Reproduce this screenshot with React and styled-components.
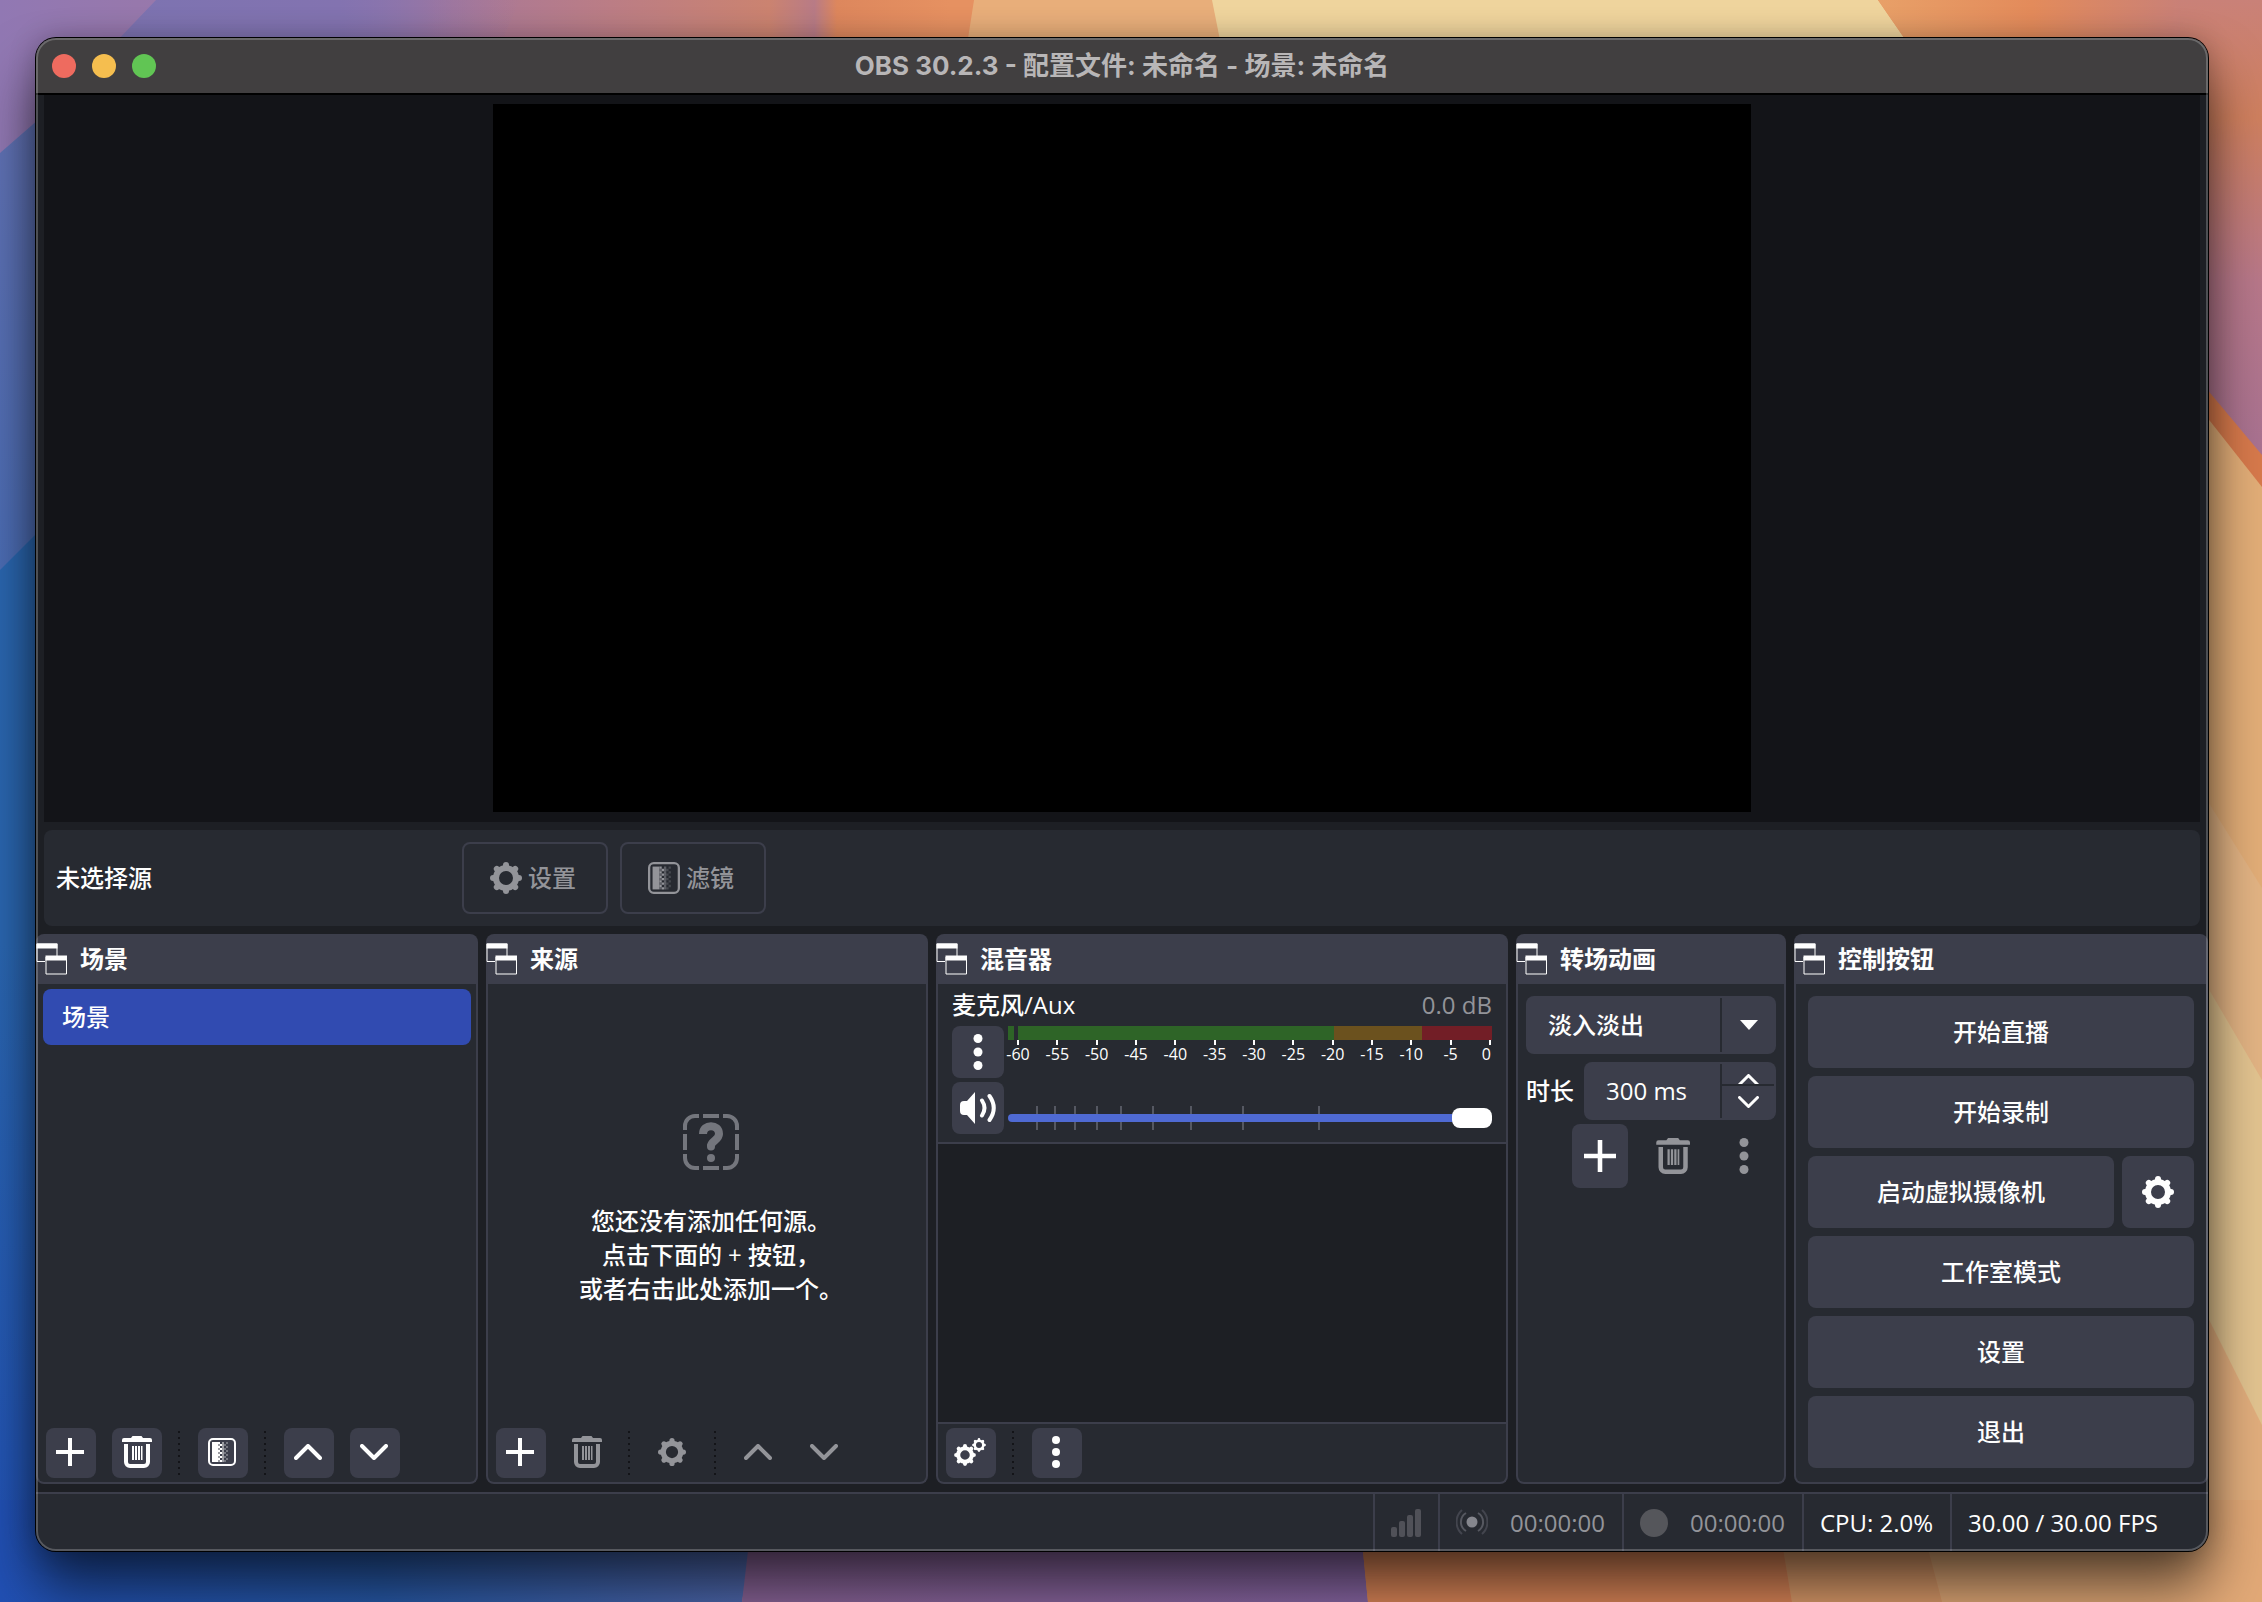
import React, { useState } from 'react';
import styled, { createGlobalStyle, css } from 'styled-components';

const colors = {
  base: '#1d1f24',
  panel: '#272a31',
  raised: '#3c3e4b',
  dark: '#131418',
  text: '#fefefe',
  muted: '#939499',
  selected: '#314bb1',
  slider: '#4f6ad3',
};

const GlobalStyle = createGlobalStyle`
  * {
    box-sizing: border-box;
  }

  body {
    margin: 0;
    color: ${colors.text};
    font-family: 'Open Sans', 'Noto Sans CJK SC', sans-serif;
    font-size: 24px;
    font-weight: 500;
    line-height: 32px;
  }

  button,
  input,
  select {
    margin: 0;
    padding: 0;
    border: none;
    background: none;
    color: inherit;
    font: inherit;
  }

  svg {
    display: block;
    flex: none;
  }
`;

const Desktop = styled.div`
  position: relative;
  display: flex;
  min-height: 100vh;
  padding: 38px 54px 51px 36px;
  overflow: hidden;
`;

const WallpaperSvg = styled.svg`
  position: absolute;
  inset: 0;
  width: 100%;
  height: 100%;
`;

const Window = styled.div`
  position: relative;
  display: flex;
  flex: 1;
  flex-direction: column;
  min-width: 0;
  overflow: hidden;
  border-radius: 20px;
  background: ${colors.base};

  &::after {
    content: '';
    position: absolute;
    inset: 0;
    border-radius: 20px;
    box-shadow: inset 0 0 0 2px rgba(255, 255, 255, 0.22);
    pointer-events: none;
  }
`;

const WindowShadow = styled.div`
  position: relative;
  display: flex;
  flex: 1;
  min-width: 0;
  border-radius: 20px;
  box-shadow: 0 0 0 1px #000, 0 36px 56px rgba(0, 0, 0, 0.6), 0 0 28px rgba(0, 0, 0, 0.24);
`;

const TitleBar = styled.header`
  display: grid;
  grid-template-columns: 1fr auto 1fr;
  align-items: center;
  height: 57px;
  padding: 0 16px;
  border-bottom: 2px solid #000;
  background: #413f40;
`;

const TrafficLights = styled.div`
  display: flex;
  gap: 16px;
`;

const Light = styled.button`
  width: 24px;
  height: 24px;
  border-radius: 50%;
  background: ${({ $color }) => $color};
`;

const Title = styled.h1`
  margin: 0;
  color: #b8b6b7;
  font-family: Inter, 'Noto Sans CJK SC', sans-serif;
  font-size: 26px;
  font-weight: 700;
`;

const Main = styled.main`
  display: flex;
  flex: 1;
  flex-direction: column;
  gap: 8px;
  padding-bottom: 8px;
`;

const Preview = styled.section`
  display: flex;
  flex: 1;
  justify-content: center;
  margin: 0 8px;
  padding: 9px 0 10px;
  background: ${colors.dark};
`;

const Canvas = styled.div`
  aspect-ratio: 16 / 9;
  background: #000;
`;

const ContextBar = styled.section`
  display: flex;
  align-items: center;
  gap: 12px;
  height: 96px;
  margin: 0 8px;
  padding: 0 12px;
  border-radius: 8px;
  background: ${colors.panel};
`;

const ContextLabel = styled.span`
  width: 394px;
`;

const OutlineButton = styled.button`
  display: flex;
  align-items: center;
  gap: 6px;
  width: 146px;
  height: 72px;
  padding: 0 26px;
  border: 2px solid ${colors.raised};
  border-radius: 8px;
  color: ${colors.muted};
  white-space: nowrap;
`;

const Docks = styled.div`
  display: grid;
  grid-template-columns:
    minmax(0, 442fr) minmax(0, 442fr) minmax(0, 572fr)
    minmax(0, 270fr) minmax(0, 414fr);
  gap: 8px;
  height: 550px;
`;

const DockBox = styled.section`
  display: flex;
  flex-direction: column;
`;

const DockHeader = styled.div`
  display: flex;
  align-items: center;
  gap: 12px;
  height: 50px;
  border-radius: 8px 8px 0 0;
  background: ${colors.raised};
`;

const DockTitle = styled.h2`
  margin: 0;
  font-size: 24px;
  font-weight: 700;
`;

const DockBody = styled.div`
  display: flex;
  flex: 1;
  flex-direction: column;
  overflow: hidden;
  border: 2px solid ${colors.raised};
  border-top: none;
  border-radius: 0 0 8px 8px;
  background: ${colors.panel};
`;

const IconButton = styled.button`
  display: flex;
  align-items: center;
  justify-content: center;
  width: ${({ $width }) => $width || 50}px;
  height: ${({ $height }) => $height || 50}px;
  border-radius: 8px;
  background: ${colors.raised};

  &:disabled {
    background: none;
    color: ${colors.muted};
  }
`;

const DockToolbar = styled.div`
  display: flex;
  align-items: center;
  gap: 16px;
  padding: 4px 8px;
  ${({ $bordered }) =>
    $bordered &&
    css`
      border-top: 2px solid ${colors.raised};
    `}

  ${IconButton} {
    padding: 0 2px 2px 0;
  }
`;

const Separator = styled.span`
  width: 2px;
  height: 44px;
  margin: 0 2px 0 0;
  background: repeating-linear-gradient(to bottom, ${colors.dark} 0 2px, transparent 2px 6px);
`;

const SceneList = styled.ul`
  flex: 1;
  margin: 0;
  padding: 5px;
  list-style: none;
`;

const SceneItem = styled.li`
  display: flex;
  align-items: center;
  height: 56px;
  padding: 0 19px;
  border-radius: 8px;
  background: ${colors.selected};
`;

const EmptySources = styled.div`
  display: flex;
  flex: 1;
  flex-direction: column;
  align-items: center;
  justify-content: center;
  gap: 34px;
  padding: 12px 0 0 8px;
  color: #74767d;
`;

const EmptyText = styled.p`
  margin: 0;
  color: ${colors.text};
  line-height: 34px;
  text-align: center;
`;

const MixerList = styled.div`
  flex: 1;
  background: ${colors.base};
`;

const MixerItem = styled.div`
  padding: 0 14px 8px;
  border-bottom: 2px solid ${colors.raised};
  background: ${colors.panel};
`;

const MixerHeading = styled.div`
  display: flex;
  align-items: center;
  justify-content: space-between;
  height: 42px;
`;

const Muted = styled.span`
  color: ${colors.muted};
`;

const MixerGrid = styled.div`
  display: grid;
  grid-template-columns: 52px minmax(0, 1fr);
  gap: 4px;
`;

const MeterBar = styled.div`
  display: flex;
  height: 14px;
`;

const MeterPart = styled.span`
  flex: ${({ $size }) => $size};
  background: ${({ $color }) => $color};
`;

const MeterScale = styled.div`
  display: flex;
  justify-content: space-between;
  padding: 0 1px 0 9px;
`;

const ScaleMark = styled.span`
  display: flex;
  flex-direction: column;
  align-items: center;
  width: 2px;
  font-size: 16px;
  line-height: 18px;

  &::before {
    content: '';
    flex: none;
    width: 2px;
    height: 5px;
    background: ${colors.text};
  }

  &:last-child {
    align-items: flex-end;
  }
`;

const SliderBox = styled.div`
  position: relative;
  align-self: end;
  height: 32px;
`;

const SliderTick = styled.span`
  position: absolute;
  top: 4px;
  width: 2px;
  height: 24px;
  background: #555862;
`;

const Slider = styled.input`
  position: relative;
  display: block;
  width: 100%;
  height: 32px;
  appearance: none;

  &::-webkit-slider-runnable-track {
    height: 8px;
    border-radius: 4px;
    background: ${colors.slider};
  }

  &::-webkit-slider-thumb {
    width: 40px;
    height: 20px;
    margin-top: -6px;
    border-radius: 8px;
    background: #fff;
    appearance: none;
  }
`;

const TransitionForm = styled.div`
  display: flex;
  flex-direction: column;
  gap: 8px;
  padding: 12px 8px 4px;
`;

const Field = styled.div`
  position: relative;
  display: flex;
  flex: 1;
  min-width: 0;
  height: 58px;
  border-radius: 8px;
  background: ${colors.raised};
`;

const FieldRow = styled.div`
  display: flex;
  align-items: center;
  gap: 10px;
`;

const ComboRow = styled.div`
  display: flex;
`;

const Select = styled.select`
  width: 100%;
  padding: 0 56px 0 22px;
  appearance: none;
`;

const ComboArrow = styled.span`
  position: absolute;
  inset: 2px 0 2px auto;
  display: flex;
  align-items: center;
  justify-content: center;
  width: 56px;
  border-left: 2px solid ${colors.panel};
  pointer-events: none;
`;

const SpinInput = styled.input`
  flex: 1;
  min-width: 0;
  padding: 0 0 0 22px;
`;

const SpinButtons = styled.div`
  display: flex;
  flex-direction: column;
  width: 56px;
  margin: 2px 0;
  padding-right: 2px;
  border-left: 2px solid ${colors.panel};
`;

const SpinButton = styled.button`
  display: flex;
  align-items: flex-end;
  justify-content: center;
  height: 20px;
  overflow: hidden;

  svg {
    margin-bottom: -2px;
  }

  & + & {
    flex: 1;
    align-items: flex-start;
    padding-top: 10px;
    border-top: 2px solid ${colors.panel};
  }
`;

const TransitionButtons = styled.div`
  display: flex;
  justify-content: flex-end;
  gap: 16px;
  padding: 0 12px;
`;

const ControlList = styled.div`
  display: flex;
  flex-direction: column;
  gap: 8px;
  padding: 12px;
`;

const ControlRow = styled.div`
  display: flex;
  gap: 8px;
`;

const ControlButton = styled.button`
  flex: 1;
  height: 72px;
  border-radius: 8px;
  background: ${colors.raised};
`;

const StatusBar = styled.footer`
  display: flex;
  justify-content: flex-end;
  height: 59px;
  padding-right: 33px;
  border-top: 2px solid ${colors.raised};
  background: ${colors.panel};
`;

const StatusItem = styled.div`
  display: flex;
  align-items: center;
  gap: 22px;
  padding: 0 17px 0 16px;
  border-left: 2px solid ${colors.raised};
  color: ${({ $active }) => ($active ? colors.text : colors.muted)};
`;

const Wallpaper = () => (
  <WallpaperSvg viewBox="0 0 2262 1602" preserveAspectRatio="none" aria-hidden="true">
    <defs>
      <linearGradient id="top">
        <stop offset="0" stopColor="#9178b3" />
        <stop offset="0.07" stopColor="#9878ab" />
        <stop offset="0.16" stopColor="#8f76ae" />
        <stop offset="0.2" stopColor="#a87898" />
        <stop offset="0.27" stopColor="#bb7d85" />
        <stop offset="0.34" stopColor="#cb8370" />
        <stop offset="0.36" stopColor="#b87b86" />
        <stop offset="0.37" stopColor="#dd875d" />
        <stop offset="0.42" stopColor="#e69161" />
      </linearGradient>
      <linearGradient id="topBlue">
        <stop offset="0" stopColor="#7b73b1" />
        <stop offset="0.6" stopColor="#8373b0" />
        <stop offset="1" stopColor="#9275a8" stopOpacity="0" />
      </linearGradient>
      <linearGradient id="topRight">
        <stop offset="0" stopColor="#e8a068" />
        <stop offset="0.4" stopColor="#e38b5b" />
        <stop offset="0.8" stopColor="#c88078" />
        <stop offset="1" stopColor="#b87d8d" />
      </linearGradient>
      <linearGradient id="rightDusk" x1="0" y1="0" x2="0" y2="1">
        <stop offset="0" stopColor="#c98178" />
        <stop offset="0.25" stopColor="#d0805f" />
        <stop offset="0.6" stopColor="#b8788a" />
        <stop offset="1" stopColor="#a87292" />
      </linearGradient>
      <linearGradient id="left" x1="0" y1="0" x2="0" y2="1">
        <stop offset="0" stopColor="#6272b4" />
        <stop offset="1" stopColor="#4a6cb4" />
      </linearGradient>
      <linearGradient id="leftDeep" x1="0" y1="0" x2="0" y2="1">
        <stop offset="0" stopColor="#2a66af" />
        <stop offset="0.4" stopColor="#2a66b0" />
        <stop offset="1" stopColor="#2150b4" />
      </linearGradient>
      <linearGradient id="bottomBlue">
        <stop offset="0" stopColor="#2150b4" />
        <stop offset="0.5" stopColor="#2759a8" />
        <stop offset="1" stopColor="#5068ac" />
      </linearGradient>
      <linearGradient id="bottomPurple">
        <stop offset="0" stopColor="#8a6498" />
        <stop offset="1" stopColor="#8866a4" />
      </linearGradient>
    </defs>
    <rect width="2262" height="1602" fill="url(#top)" />
    <polygon points="156,0 520,0 480,90 70,90" fill="url(#topBlue)" />
    <polygon points="974,0 1220,0 1220,90 960,90" fill="#e8ae7a" />
    <polygon points="1212,0 1878,0 1940,90 1230,90" fill="#efd49d" />
    <polygon points="1878,0 2262,0 2262,90 1940,90" fill="url(#topRight)" />
    <polygon points="2180,0 2262,0 2262,470 2180,400" fill="url(#rightDusk)" />
    <polygon points="2180,357 2262,455 2262,500 2180,420" fill="#d87a4c" />
    <polygon points="2180,383 2262,487 2262,900 2180,770" fill="#e3ae78" />
    <polygon points="2180,757 2262,888 2262,1100 2180,960" fill="#e3b484" />
    <polygon points="2180,940 2262,1080 2262,1440 2180,1280" fill="#e3c490" />
    <polygon points="2180,1262 2262,1425 2262,1602 2180,1602" fill="#e2ae7d" />
    <polygon points="0,153 70,92 70,600 0,600" fill="url(#left)" />
    <polygon points="0,570 70,500 70,1602 0,1602" fill="url(#leftDeep)" />
    <polygon points="0,1500 760,1500 742,1602 0,1602" fill="url(#bottomBlue)" />
    <polygon points="754,1500 1358,1500 1368,1602 742,1602" fill="url(#bottomPurple)" />
    <polygon points="1358,1500 1775,1500 1792,1602 1368,1602" fill="#dc8658" />
    <polygon points="1775,1500 1915,1500 1942,1602 1792,1602" fill="#dc9b6a" />
    <polygon points="1915,1500 2262,1500 2262,1602 1942,1602" fill="#e2a977" />
  </WallpaperSvg>
);

const PopoutIcon = () => (
  <svg width="32" height="32" viewBox="0 0 32 32" fill="none" stroke="currentColor">
    <path d="M9 18.500H1V1h20v12" />
    <path d="M10 14h20.500v17H10z" />
    <path d="M0.500 3h21M9.500 15h21.500" strokeWidth="5" />
  </svg>
);

const PlusIcon = ({ size = 28 }) => (
  <svg width={size} height={size} viewBox="0 0 28 28" fill="currentColor">
    <path d="M12 0h4v12h12v4H16v12h-4V16H0v-4h12z" />
  </svg>
);

const TrashIcon = ({ size = 32 }) => (
  <svg width={size} height={size} viewBox="-2 0 32 32" fill="currentColor">
    <path d="M0 6V4a2 2 0 0 1 2-2h7l1.500-2h9L21 2h7a2 2 0 0 1 2 2v2z" />
    <path d="M2 8h4v18a2 2 0 0 0 2 2h14a2 2 0 0 0 2-2V8h4v18a6 6 0 0 1-6 6H8a6 6 0 0 1-6-6z" />
    <path d="M10 10h2v14h-2zM13 10h2v14h-2zM16 10h2v14h-2zM19 10h1.500v14H19z" />
  </svg>
);

const FilterIcon = ({ size = 28 }) => (
  <svg width={size} height={size} viewBox="0 0 28 28" fill="currentColor">
    <rect x="1" y="1" width="26" height="26" rx="4" fill="none" stroke="currentColor" strokeWidth="2" />
    <path d="M4 4h6v20H4z" />
    {[4, 8, 12, 16, 20].map((y) => (
      <React.Fragment key={y}>
        <path d={`M10 ${y}h2v2h-2zM12 ${y + 2}h2v2h-2z`} />
        <path d={`M10 ${y + 2}h2v2h-2zM14 ${y}h2v2h-2zM14 ${y + 2}h2v2h-2z`} opacity="0.5" />
        <path d={`M16 ${y + 2}h2v2h-2zM18 ${y}h2v2h-2z`} opacity="0.3" />
      </React.Fragment>
    ))}
  </svg>
);

const GearShape = () => (
  <g fill="none" stroke="currentColor">
    <circle r="10" strokeWidth="6" />
    {[0, 45, 90, 135, 180, 225, 270, 315].map((angle) => (
      <path key={angle} d="M0-11V-13" strokeWidth="6" strokeLinecap="round" transform={`rotate(${angle})`} />
    ))}
  </g>
);

const GearIcon = ({ size = 32 }) => (
  <svg width={size} height={size} viewBox="-16 -16 32 32">
    <GearShape />
  </svg>
);

const GearsIcon = () => (
  <svg width="32" height="32" viewBox="0 0 32 32">
    <g transform="translate(11 19) scale(0.68)">
      <GearShape />
    </g>
    <g transform="translate(25 9) scale(0.43)">
      <GearShape />
    </g>
  </svg>
);

const ChevronIcon = ({ down, width = 28 }) => (
  <svg
    width={width}
    height={(width * 4) / 7}
    viewBox="0 0 28 16"
    fill="none"
    stroke="currentColor"
    strokeWidth="4"
    strokeLinecap="round"
    strokeLinejoin="round"
  >
    <path d={down ? 'M2 2l12 12L26 2' : 'M2 14L14 2l12 12'} />
  </svg>
);

const DotsIcon = ({ size = 32 }) => (
  <svg width={size} height={size} viewBox="0 0 32 32" fill="currentColor">
    <circle cx="16" cy="4" r="4" />
    <circle cx="16" cy="16" r="4" />
    <circle cx="16" cy="28" r="4" />
  </svg>
);

const SpeakerIcon = () => (
  <svg width="36" height="32" viewBox="0 0 36 32" fill="currentColor">
    <path d="M0 13a4 4 0 0 1 4-4h3L15 0v32L7 23H4a4 4 0 0 1-4-4z" />
    <path
      d="M22 8.500q5 7.500 0 15M29.500 4q8.500 12 0 24"
      fill="none"
      stroke="currentColor"
      strokeWidth="4"
      strokeLinecap="round"
    />
  </svg>
);

const UnknownIcon = () => (
  <svg width="56" height="56" viewBox="0 0 56 56" fill="none" stroke="currentColor" strokeWidth="4">
    <path d="M2 16v-4A10 10 0 0 1 12 2h4M20 2h16M40 2h4a10 10 0 0 1 10 10v4M54 20v16M54 40v4a10 10 0 0 1-10 10h-4M36 54H20M16 54h-4A10 10 0 0 1 2 44v-4M2 36V20" />
    <path d="M20 20C20 9.500 36 9.500 36 20c0 6-8 7-8 12" strokeWidth="8" />
    <circle cx="28" cy="32.500" r="4" fill="currentColor" stroke="none" />
    <circle cx="28" cy="44" r="4" fill="currentColor" stroke="none" />
  </svg>
);

const SignalIcon = () => (
  <svg width="30" height="28" viewBox="0 0 30 28" fill="#505158">
    <rect y="18" width="6" height="10" rx="2" />
    <rect x="8" y="12" width="6" height="16" rx="2" />
    <rect x="16" y="6" width="6" height="22" rx="2" />
    <rect x="24" width="6" height="28" rx="2" />
  </svg>
);

const BroadcastIcon = () => (
  <svg width="32" height="32" viewBox="0 0 32 32" fill="none" stroke="#565860" strokeWidth="2">
    <circle cx="16" cy="15" r="5.500" fill="#85868d" stroke="none" />
    <path d="M10 6a10.500 10.500 0 0 0 0 18M22 6a10.500 10.500 0 0 1 0 18" />
    <path d="M6 3a16 16 0 0 0 0 24M26 3a16 16 0 0 1 0 24" stroke="#43454e" />
  </svg>
);

const RecordIcon = () => (
  <svg width="28" height="28" viewBox="0 0 28 28">
    <circle cx="14" cy="14" r="14" fill="#55565b" />
  </svg>
);

const Dock = ({ title, children }) => (
  <DockBox>
    <DockHeader>
      <PopoutIcon />
      <DockTitle>{title}</DockTitle>
    </DockHeader>
    <DockBody>{children}</DockBody>
  </DockBox>
);

const meterParts = [
  { size: 6, color: '#2e6427' },
  { size: 4, color: colors.panel },
  { size: 316, color: '#2e6427' },
  { size: 88, color: '#6b511e' },
  { size: 70, color: '#721e26' },
];

const meterLabels = [-60, -55, -50, -45, -40, -35, -30, -25, -20, -15, -10, -5, 0];

const sliderTicks = [5.8, 9.5, 13.7, 18.2, 23.2, 29.7, 37.6, 48.3, 64];

const AudioMixer = () => {
  const [volume, setVolume] = useState(100);

  return (
    <Dock title="混音器">
      <MixerList>
        <MixerItem>
          <MixerHeading>
            <label htmlFor="volume">麦克风/Aux</label>
            <Muted>0.0 dB</Muted>
          </MixerHeading>
          <MixerGrid>
            <IconButton $width={52} $height={52} aria-label="菜单">
              <DotsIcon size={36} />
            </IconButton>
            <div>
              <MeterBar>
                {meterParts.map((part, index) => (
                  <MeterPart key={index} $size={part.size} $color={part.color} />
                ))}
              </MeterBar>
              <MeterScale>
                {meterLabels.map((label) => (
                  <ScaleMark key={label}>{label}</ScaleMark>
                ))}
              </MeterScale>
            </div>
            <IconButton $width={52} $height={52} aria-label="静音">
              <SpeakerIcon />
            </IconButton>
            <SliderBox>
              {sliderTicks.map((tick) => (
                <SliderTick key={tick} style={{ left: `${tick}%` }} />
              ))}
              <Slider
                id="volume"
                type="range"
                min="0"
                max="100"
                value={volume}
                onChange={(e) => setVolume(Number(e.target.value))}
              />
            </SliderBox>
          </MixerGrid>
        </MixerItem>
      </MixerList>
      <DockToolbar $bordered>
        <IconButton aria-label="高级音频属性">
          <GearsIcon />
        </IconButton>
        <Separator />
        <IconButton aria-label="菜单">
          <DotsIcon />
        </IconButton>
      </DockToolbar>
    </Dock>
  );
};

const Transitions = () => {
  const [duration, setDuration] = useState(300);

  return (
    <Dock title="转场动画">
      <TransitionForm>
        <ComboRow>
          <Field>
            <Select aria-label="转场动画" defaultValue="fade">
              <option value="fade">淡入淡出</option>
            </Select>
            <ComboArrow>
              <svg width="18" height="10" viewBox="0 0 18 10" fill="currentColor">
                <path d="M0 0h18L9 10z" />
              </svg>
            </ComboArrow>
          </Field>
        </ComboRow>
        <FieldRow>
          <label htmlFor="duration">时长</label>
          <Field>
            <SpinInput id="duration" value={`${duration} ms`} readOnly />
            <SpinButtons>
              <SpinButton aria-label="增加" onClick={() => setDuration(duration + 50)}>
                <ChevronIcon width={21} />
              </SpinButton>
              <SpinButton aria-label="减少" onClick={() => setDuration(Math.max(50, duration - 50))}>
                <ChevronIcon down width={21} />
              </SpinButton>
            </SpinButtons>
          </Field>
        </FieldRow>
      </TransitionForm>
      <TransitionButtons>
        <IconButton $width={56} $height={64} aria-label="添加">
          <PlusIcon size={32} />
        </IconButton>
        <IconButton $width={56} $height={64} aria-label="移除" disabled>
          <TrashIcon size={36} />
        </IconButton>
        <IconButton $width={56} $height={64} aria-label="菜单" disabled>
          <DotsIcon size={36} />
        </IconButton>
      </TransitionButtons>
    </Dock>
  );
};

const App = () => {
  return (
    <>
      <GlobalStyle />
      <Desktop>
        <Wallpaper />
        <WindowShadow>
          <Window>
            <TitleBar>
              <TrafficLights>
                <Light $color="#ee6b5f" aria-label="关闭" />
                <Light $color="#f5be4f" aria-label="最小化" />
                <Light $color="#61c554" aria-label="缩放" />
              </TrafficLights>
              <Title>OBS 30.2.3 - 配置文件: 未命名 - 场景: 未命名</Title>
            </TitleBar>
            <Main>
              <Preview>
                <Canvas />
              </Preview>
              <ContextBar>
                <ContextLabel>未选择源</ContextLabel>
                <OutlineButton disabled>
                  <GearIcon />
                  设置
                </OutlineButton>
                <OutlineButton disabled>
                  <FilterIcon size={32} />
                  滤镜
                </OutlineButton>
              </ContextBar>
              <Docks>
                <Dock title="场景">
                  <SceneList>
                    <SceneItem>场景</SceneItem>
                  </SceneList>
                  <DockToolbar>
                    <IconButton aria-label="添加">
                      <PlusIcon />
                    </IconButton>
                    <IconButton aria-label="移除">
                      <TrashIcon />
                    </IconButton>
                    <Separator />
                    <IconButton aria-label="滤镜">
                      <FilterIcon />
                    </IconButton>
                    <Separator />
                    <IconButton aria-label="上移">
                      <ChevronIcon />
                    </IconButton>
                    <IconButton aria-label="下移">
                      <ChevronIcon down />
                    </IconButton>
                  </DockToolbar>
                </Dock>
                <Dock title="来源">
                  <EmptySources>
                    <UnknownIcon />
                    <EmptyText>
                      您还没有添加任何源。
                      <br />
                      点击下面的 + 按钮，
                      <br />
                      或者右击此处添加一个。
                    </EmptyText>
                  </EmptySources>
                  <DockToolbar>
                    <IconButton aria-label="添加">
                      <PlusIcon />
                    </IconButton>
                    <IconButton aria-label="移除" disabled>
                      <TrashIcon />
                    </IconButton>
                    <Separator />
                    <IconButton aria-label="属性" disabled>
                      <GearIcon size={28} />
                    </IconButton>
                    <Separator />
                    <IconButton aria-label="上移" disabled>
                      <ChevronIcon />
                    </IconButton>
                    <IconButton aria-label="下移" disabled>
                      <ChevronIcon down />
                    </IconButton>
                  </DockToolbar>
                </Dock>
                <AudioMixer />
                <Transitions />
                <Dock title="控制按钮">
                  <ControlList>
                    <ControlRow>
                      <ControlButton>开始直播</ControlButton>
                    </ControlRow>
                    <ControlRow>
                      <ControlButton>开始录制</ControlButton>
                    </ControlRow>
                    <ControlRow>
                      <ControlButton>启动虚拟摄像机</ControlButton>
                      <IconButton $width={72} $height={72} aria-label="虚拟摄像机设置">
                        <GearIcon />
                      </IconButton>
                    </ControlRow>
                    <ControlRow>
                      <ControlButton>工作室模式</ControlButton>
                    </ControlRow>
                    <ControlRow>
                      <ControlButton>设置</ControlButton>
                    </ControlRow>
                    <ControlRow>
                      <ControlButton>退出</ControlButton>
                    </ControlRow>
                  </ControlList>
                </Dock>
              </Docks>
            </Main>
            <StatusBar>
              <StatusItem>
                <SignalIcon />
              </StatusItem>
              <StatusItem>
                <BroadcastIcon />
                00:00:00
              </StatusItem>
              <StatusItem>
                <RecordIcon />
                00:00:00
              </StatusItem>
              <StatusItem $active>CPU: 2.0%</StatusItem>
              <StatusItem $active>30.00 / 30.00 FPS</StatusItem>
            </StatusBar>
          </Window>
        </WindowShadow>
      </Desktop>
    </>
  );
};

export default App;
